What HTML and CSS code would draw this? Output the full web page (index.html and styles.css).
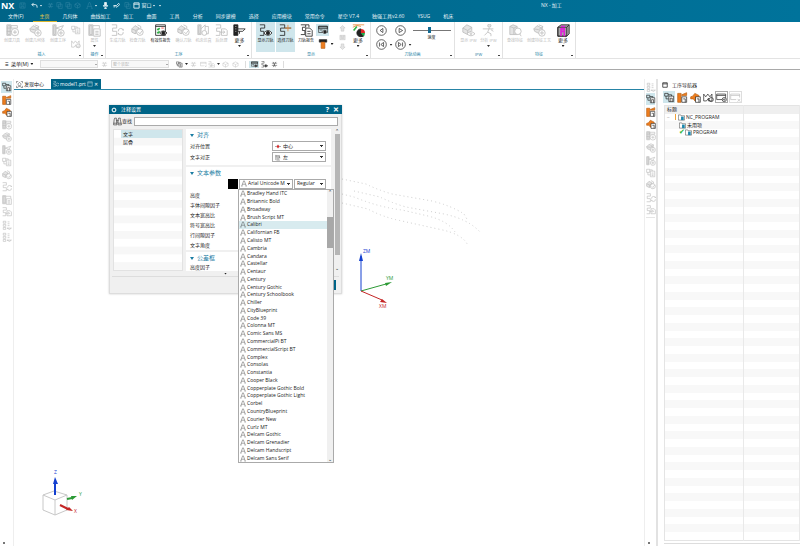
FILE: index.html
```
<!DOCTYPE html>
<html lang="zh-CN">
<head>
  <meta charset="UTF-8">
  <meta name="viewport" content="width=device-width, initial-scale=1.0">
  <title>NX - 加工</title>
  <link rel="stylesheet" href="styles.css">
</head>
<body>
  <svg class="sprite" aria-hidden="true">
    <symbol id="tool-add" viewBox="0 0 16 16"><path d="M1 1h5v13H1zM6 2h8v3H6zM1 5h5M1 9h5"/><path class="solid" d="M2 2h3v11H2z"/><circle class="paper" cx="11" cy="10" r="4.5"/><path d="M11 7.500v5M8.500 10h5"/></symbol>
    <symbol id="geom-add" viewBox="0 0 16 16"><path class="solid" d="M1 6l4-4 4 2 3 3-4 5-6-3z"/><path d="M7 1l5 2-1 5M1 6l6 1 5-4"/><circle class="paper" cx="11" cy="11" r="4"/><path d="M11 8.500v5M8.500 11h5"/></symbol>
    <symbol id="op-add" viewBox="0 0 16 16"><path d="M1 1h4v13H1zM5 5l9-3-3 5z"/><path class="solid" d="M2 2h2v11H2z"/><circle class="paper" cx="11" cy="11" r="4"/><path d="M11 8.500v5M8.500 11h5"/></symbol>
    <symbol id="pages" viewBox="0 0 16 16"><path d="M1 2h5v5H1zM3 7v4h4"/><path class="paper" d="M7 5h7v9H7z"/><path d="M9 8h3M9 10h3M9 12h3M6 3h4v2"/></symbol>
    <symbol id="mill" viewBox="0 0 16 16"><path d="M1 3l3 4 3-4 3 4 3-4v10H8V9l-3 4H1z"/><circle cx="12" cy="11" r="3"/></symbol>
    <symbol id="props" viewBox="0 0 16 16"><path d="M1 1h5v13H1zM6 2h8v3"/><path class="solid" d="M2 2h3v11H2z"/><path class="paper" d="M7 6h8v9H7z"/><path d="M9 9h4M9 11h4M9 13h4"/></symbol>
    <symbol id="track" viewBox="0 0 16 16"><path d="M1 1h6v4H2v4h5v5H1"/><path d="M9 9a3 3 0 0 1 6-1v-2M15 10a3 3 0 0 1-6 1v2"/></symbol>
    <symbol id="track-out" viewBox="0 0 16 16"><path d="M1 1h6v4H2v4h4v5H1"/><path d="M8 6h5l2 2v6H8zM6 10h6M10 8l2 2-2 2"/></symbol>
    <symbol id="track-eye" viewBox="0 0 16 16"><path d="M1 1h6v4H2v4h4v5H1"/><path class="paper" d="M6 11q5-6 10 0q-5 6-10 0z"/><circle class="fill" cx="11" cy="11" r="2"/></symbol>
    <symbol id="track-pick" viewBox="0 0 16 16"><path d="M1 1h6v4H2v4h5v5H1M7 5h8"/><path class="orange" d="M11 1v8M7 5h8"/></symbol>
    <symbol id="track-doc" viewBox="0 0 16 16"><path d="M1 1h6v3H3v4h3v5H1M7 1h4v3"/><path class="paper" d="M7 5h5l3 3v7H7z"/><path d="M9 9h4M9 12h4"/></symbol>
    <symbol id="verify" viewBox="0 0 16 16"><path class="solid" d="M1 6l4-4 5 3v4l-5 3-4-2z"/><path d="M1 6l5 2 4-3M6 8v4M8 1l4 2v3"/><circle class="paper" cx="11" cy="10" r="4"/><path d="M9 10l2 2 3-4"/></symbol>
    <symbol id="report" viewBox="0 0 16 16"><path d="M2 1h12v13H2zM2 3h12"/><path class="green" d="M4 6l1 1 2-2M4 10l1 1 2-2"/><path class="red" d="M9 5h3"/><path class="paper" d="M7 11q4-5 9 0q-5 5-9 0z"/><circle class="fill" cx="11.500" cy="11" r="2"/></symbol>
    <symbol id="machine" viewBox="0 0 16 16"><path d="M1 1h4v12H1zM5 6l5-5v7M10 3h4v9H9"/><path class="solid" d="M2 2h2v10H2z"/><circle class="paper" cx="9" cy="11" r="3"/></symbol>
    <symbol id="machine-more" viewBox="0 0 16 16"><path class="fill" d="M1 1h5v13H1z"/><path class="lite" d="M3 3h1M3 6h1M3 9h1"/><path d="M6 6h9l-3 3H6M8 9v3"/></symbol>
    <symbol id="screen-eye" viewBox="0 0 16 16"><path class="solid" d="M1 2h14v4H1z"/><path d="M1 2h14v10H1zM3 8h4"/><path class="paper" d="M6 11q5-5 9 0q-4 5-9 0z"/><circle class="fill" cx="11" cy="11" r="2"/></symbol>
    <symbol id="bolt" viewBox="0 0 16 16"><path class="fill" d="M2 1h12v4H2z"/><path class="orange-fill" d="M5 5h6v10H5z"/></symbol>
    <symbol id="arrow-up" viewBox="0 0 16 16"><path class="solid" d="M8 1l6 6h-3v7H5V7H2z"/></symbol>
    <symbol id="arrow-down" viewBox="0 0 16 16"><path class="solid" d="M8 15l6-6h-3V2H5v7H2z"/></symbol>
    <symbol id="stack" viewBox="0 0 16 16"><path class="solid" d="M2 3h12v10H2z"/><path d="M5 3v4h6V3M5 10h6"/></symbol>
    <symbol id="palette" viewBox="0 0 16 16"><path class="orange" d="M1 4q5-4 10-1M1 1h14"/><path class="green" d="M2 8l4-5"/><path class="fill" d="M11 6v5l4 3a5 5 0 1 1-4-8z"/><path class="red-fill" d="M11 6a5 5 0 0 1 5 5h-5z"/><path class="green-fill" d="M11 11h5a5 5 0 0 1-2 4z"/></symbol>
    <symbol id="play-back" viewBox="0 0 16 16"><circle cx="8" cy="8" r="7"/><path d="M10 5L6 8l4 3z"/></symbol>
    <symbol id="play" viewBox="0 0 16 16"><circle cx="8" cy="8" r="7"/><path d="M6 5l5 3-5 3z"/></symbol>
    <symbol id="first" viewBox="0 0 16 16"><circle cx="8" cy="8" r="7"/><path d="M11 5L7 8l4 3zM5 5v6"/></symbol>
    <symbol id="last" viewBox="0 0 16 16"><circle cx="8" cy="8" r="7"/><path d="M5 5l4 3-4 3zM11 5v6"/></symbol>
    <symbol id="ipw" viewBox="0 0 16 16"><path class="solid" d="M1 5l5-4 6 3v4l-5 5-6-3z"/><path d="M1 5l6 3 5-4M7 8v5"/><path class="paper" d="M6 12q5-5 10 0q-5 5-10 0z"/><circle cx="11" cy="12" r="1"/></symbol>
    <symbol id="runner" viewBox="0 0 16 16"><circle class="solid" cx="9" cy="2" r="2"/><path d="M1 6h13M9 5l-2 5 4 2v3M7 10l-4 4M11 7l3 2"/></symbol>
    <symbol id="feature" viewBox="0 0 16 16"><path class="solid" d="M1 3l4-2 5 2v10H1z"/><path d="M1 3l5 2v8M6 5l4-2"/><circle class="paper" cx="11" cy="9" r="4"/><path d="M13 12l2 3"/></symbol>
    <symbol id="magenta" viewBox="0 0 16 16"><path class="solid" d="M1 4l4-3h10v11l-3 3H1z"/><path d="M1 4h11v11M12 4l3-3M1 4v11h11"/><path class="magenta" d="M5 15V6h4v9M5 9h4M5 3h5"/></symbol>
    <symbol id="op-tree" viewBox="0 0 16 16"><path d="M1 2h5v4H1zM3 6v4h4M6 4h5v3"/><path class="paper" d="M7 6h7v8H7z"/><path d="M9 9h3v5M9 9v5"/></symbol>
    <symbol id="tool-tree" viewBox="0 0 16 16"><path class="orange-fill" d="M1 2h5v13H1zM7 4l7-3v4H7z"/><path class="paper" d="M7 7h7v8H7z"/><path d="M9 10h3v5"/></symbol>
    <symbol id="geom-tree" viewBox="0 0 16 16"><path class="orange-fill" d="M1 7l3-1 3-4 6 3v6l-6 2-2-3H1z"/><path class="paper" d="M8 7h7v8H8z"/><path d="M10 10h3v5"/></symbol>
    <symbol id="rows" viewBox="0 0 16 16"><path d="M2 2h4v3H2zM2 7h4v3H2zM2 12h4v3H2zM9 3h3M9 6h3M9 9h3M8 13h7l-3 2z"/></symbol>
    <symbol id="window-gear" viewBox="0 0 16 16"><path d="M1 3h13v8H1zM1 5h13"/><circle class="paper" cx="12" cy="11" r="3"/><circle cx="12" cy="11" r="1"/></symbol>
    <symbol id="window-x" viewBox="0 0 16 16"><path d="M9 11H1V3h13v5M1 5h13M11 10l4 4M15 10l-4 4"/></symbol>
    <symbol id="cube" viewBox="0 0 16 16"><path d="M2 5l6-3 6 3v6l-6 3-6-3zM2 5l6 3 6-3M8 8v6"/></symbol>
    <symbol id="scan" viewBox="0 0 16 16"><path d="M1 5V1h4M11 1h4v4M15 11v4h-4M5 15H1v-4M8 3l4 4-4 5-4-5zM4 12h8"/></symbol>
    <symbol id="frame" viewBox="0 0 16 16"><path d="M2 2h12v12H2zM2 5h12"/></symbol>
    <symbol id="save" viewBox="0 0 16 16"><path d="M2 2h12v12H2zM5 2v5h6V2M5 14v-4h6v4"/></symbol>
    <symbol id="undo" viewBox="0 0 16 16"><path d="M6 2L2 6l4 4M2 6h8q5 0 4 7"/></symbol>
    <symbol id="cut" viewBox="0 0 16 16"><path d="M2 5h12M2 10h12M5 2l5 12M11 2L5 14"/></symbol>
    <symbol id="copy" viewBox="0 0 16 16"><path d="M2 1h8v10H2zM6 5h8v10H6z"/></symbol>
    <symbol id="mic" viewBox="0 0 16 16"><path class="fill" d="M6 1h4v8H6z"/><path d="M3 7q0 5 5 5t5-5M8 12v3M5 15h6"/></symbol>
    <symbol id="pen" viewBox="0 0 16 16"><path d="M1 8h7l5-5 2 3-6 6-3-2M1 11h4"/></symbol>
    <symbol id="gear" viewBox="0 0 16 16"><circle cx="8" cy="8" r="4.500"/><path d="M8 1v3M8 12v3M1 8h3M12 8h3M3 3l2 2M11 11l2 2M13 3l-2 2M5 11l-2 2"/></symbol>
    <symbol id="binoculars" viewBox="0 0 16 16"><path d="M3 2h3v3l1 9H1l1-9zM10 2h3v3l2 9H9V5zM6 6h4M7 9h2M1 11h6M9 11h6"/></symbol>
    <symbol id="letter-a" viewBox="0 0 16 16"><path d="M2 15L7 1h2l5 14M4 10h8M1 15h3M12 15h3"/></symbol>
    <symbol id="center-mark" viewBox="0 0 16 16"><path d="M0 8h16M8 3v10"/><path class="red-fill" d="M5 5h6v6H5z"/></symbol>
    <symbol id="left-mark" viewBox="0 0 16 16"><path d="M2 1v14M2 3h10v3H2M4 9h10M4 12h7M4 15h9M12 6v3"/></symbol>
    <symbol id="folder" viewBox="0 0 16 16"><path class="paper" d="M1 2h5l1 2h8v10H1z"/><path class="teal-fill" d="M7 6h6v8H7z"/></symbol>
  </svg>

  <header class="app-head">
    <div class="titlebar">
      <strong class="brand">NX</strong>
      <div class="quick">
        <button class="q dim" aria-label="保存"><svg><use href="#save"/></svg></button>
        <button class="q wide" aria-label="撤消"><svg><use href="#undo"/></svg><i class="caret"></i></button>
        <button class="q dim" aria-label="剪切"><svg><use href="#cut"/></svg></button>
        <button class="q dim" aria-label="复制"><svg><use href="#copy"/></svg></button>
        <button class="q dim" aria-label="粘贴"><svg><use href="#copy"/></svg></button>
        <button class="q dim" aria-label="重复"><svg><use href="#cube"/></svg></button>
        <button class="q wide dim" aria-label="文本"><svg><use href="#letter-a"/></svg><i class="caret"></i></button>
        <button class="q" aria-label="语音"><svg><use href="#mic"/></svg></button>
        <button class="q pen" aria-label="触控"><svg><use href="#pen"/></svg></button>
        <button class="q dim" aria-label="层叠"><svg><use href="#copy"/></svg></button>
        <button class="q text"><svg><use href="#frame"/></svg>窗口<i class="caret"></i></button>
        <button class="q tail" aria-label="更多"><i class="caret"></i></button>
      </div>
      <span class="app-title">NX - 加工</span>
    </div>
    <nav class="menu">
      <a href="#" class="m-file">文件(F)</a>
      <a href="#" class="active">主页</a>
      <a href="#">几何体</a>
      <a href="#">曲线加工</a>
      <a href="#">加工</a>
      <a href="#">曲面</a>
      <a href="#">工具</a>
      <a href="#">分析</a>
      <a href="#">同步建模</a>
      <a href="#">选择</a>
      <a href="#">应用模块</a>
      <a href="#">常用命令</a>
      <a href="#">星空 V7.4</a>
      <a href="#">独强工具v2.60</a>
      <a href="#">YSUG</a>
      <a href="#">机床</a>
    </nav>
  </header>

  <div class="ribbon">
    <section class="group g-insert">
      <div class="tools">
        <button disabled><svg><use href="#tool-add"/></svg>创建刀具</button>
        <button disabled><svg><use href="#geom-add"/></svg>创建几何体</button>
        <button disabled><svg><use href="#op-add"/></svg>创建工序</button>
        <div class="mini">
          <button disabled aria-label="创建程序"><svg><use href="#pages"/></svg></button>
          <button disabled aria-label="创建方法"><svg><use href="#mill"/></svg></button>
        </div>
      </div>
      <h2>插入</h2>
    </section>
    <section class="group g-action">
      <div class="tools">
        <button disabled><svg><use href="#props"/></svg>属性<i class="caret dark"></i></button>
      </div>
      <h2>操作</h2>
    </section>
    <section class="group g-process">
      <div class="tools">
        <button disabled><svg><use href="#track"/></svg>生成刀轨</button>
        <button disabled><svg><use href="#verify"/></svg>检查刀轨</button>
        <button class="wide"><svg><use href="#report"/></svg>有效性报告</button>
        <button disabled><svg><use href="#verify"/></svg>确认刀轨</button>
        <button disabled><svg><use href="#machine"/></svg>机床仿真</button>
        <button class="slim" disabled><svg><use href="#track-out"/></svg>后处理</button>
        <button class="more"><svg><use href="#machine-more"/></svg>更多<i class="caret"></i></button>
      </div>
      <h2>工序</h2>
    </section>
    <section class="group g-show">
      <div class="tools">
        <button class="on"><svg><use href="#track-eye"/></svg>显示刀轨</button>
        <button class="on"><svg><use href="#track-pick"/></svg>选择刀轨</button>
        <button><svg><use href="#track-doc"/></svg>刀轨报告</button>
        <div class="mini">
          <button class="on" aria-label="显示工件"><svg><use href="#screen-eye"/></svg></button>
          <button aria-label="显示刀具"><svg><use href="#bolt"/></svg><i class="caret"></i></button>
        </div>
        <div class="mini steps">
          <button disabled aria-label="上移"><svg><use href="#arrow-up"/></svg></button>
          <button disabled aria-label="当前层"><svg><use href="#stack"/></svg></button>
          <button disabled aria-label="下移"><svg><use href="#arrow-down"/></svg></button>
        </div>
        <button class="slim more"><svg><use href="#palette"/></svg>更多<i class="caret"></i></button>
      </div>
      <h2>显示</h2>
    </section>
    <section class="group g-anim">
      <div class="tools">
        <div class="player">
          <button aria-label="反向播放"><svg><use href="#play-back"/></svg></button>
          <button aria-label="播放"><svg><use href="#play"/></svg></button>
          <button aria-label="上一步"><svg><use href="#first"/></svg><i class="caret"></i></button>
          <button aria-label="下一步"><svg><use href="#last"/></svg><i class="caret"></i></button>
        </div>
        <div class="speed">
          <input type="range" id="speed" min="0" max="100" value="44">
          <label for="speed">速度</label>
        </div>
      </div>
      <h2>刀轨动画</h2>
    </section>
    <section class="group g-ipw">
      <div class="tools">
        <button disabled><svg><use href="#ipw"/></svg>显示 IPW</button>
        <button disabled><svg><use href="#runner"/></svg>分析 IPW<i class="caret dark"></i></button>
      </div>
      <h2>IPW</h2>
    </section>
    <section class="group g-feature">
      <div class="tools">
        <button disabled><svg><use href="#feature"/></svg>查找特征</button>
        <button disabled><svg><use href="#geom-add"/></svg>创建特征工艺</button>
        <button class="more"><svg><use href="#magenta"/></svg>更多<i class="caret"></i></button>
      </div>
      <h2>特征</h2>
    </section>
  </div>

  <div class="selectbar">
    <button class="menu-btn"><span class="burger">☰</span>菜单(M)<i class="caret"></i></button>
    <select class="filter" aria-label="类型过滤器" disabled><option></option></select>
    <button class="sb" disabled aria-label="重置过滤器"><svg><use href="#cut"/></svg></button>
    <select class="filter" aria-label="选择范围" disabled><option>整个装配</option></select>
    <div class="sb-icons">
      <button class="sb" aria-label="捕捉"><svg><use href="#pages"/></svg><i class="caret"></i></button>
      <button class="sb" disabled aria-label="选择"><svg><use href="#cut"/></svg></button>
      <button class="sb" disabled aria-label="视图"><svg><use href="#window-x"/></svg></button>
      <button class="sb" disabled aria-label="矩形"><svg><use href="#track-out"/></svg><i class="caret dark"></i></button>
      <button class="sb" disabled aria-label="体"><svg><use href="#cube"/></svg></button>
      <button class="sb" disabled aria-label="面"><svg><use href="#cube"/></svg></button>
    </div>
    <div class="sb-icons last">
      <button class="sb on" aria-label="显示"><svg><use href="#screen-eye"/></svg></button>
      <button class="sb" aria-label="坐标"><svg><use href="#track-eye"/></svg></button>
      <button class="sb" aria-label="比例"><svg><use href="#cut"/></svg></button>
    </div>
  </div>

  <div class="work">
    <aside class="rail rail-left">
      <div class="rail-icons" id="railLeft"></div>
      <span class="grip"></span>
    </aside>

    <main class="stage">
      <div class="doc-tabs">
        <button class="tab"><svg><use href="#scan"/></svg>发现中心</button>
        <button class="tab current"><svg><use href="#track"/></svg>model1.prt <svg><use href="#frame"/></svg><span>✕</span></button>
      </div>
      <div class="canvas">
        <svg class="curves" viewBox="0 0 150 75" aria-hidden="true">
          <path d="M0 7L24 12Q36 18 50 22L90 29Q110 34 122 42L126 49"/>
          <path d="M12 19L38 25Q50 31 64 35L102 42Q126 47 138 60"/>
          <path d="M0 22L12 25Q36 35 60 38L86 44Q106 49 113 60"/>
          <path d="M0 31L26 37Q40 45 60 49L96 57Q122 62 126 74"/>
        </svg>
        <svg class="wcs" viewBox="0 0 50 66" role="img" aria-label="加工坐标系">
          <path class="z" d="M9 43V8"/><path class="z-tip" d="M9 5l2 8H7z"/>
          <path class="y" d="M9 43l25-7"/><path class="y-tip" d="M40 34l-6 4-1-3z"/>
          <path class="x" d="M9 43l21 9"/><path class="x-tip" d="M35 55l-7-1 2-3z"/>
          <text class="z-tip" x="11" y="5">ZM</text>
          <text class="y-tip" x="34" y="32">YM</text>
          <text class="x-tip" x="27" y="60">XM</text>
        </svg>
        <svg class="view-cube" viewBox="0 0 46 50" role="img" aria-label="视图方向">
          <path class="box" d="M3 27l11-4 13 4v15l-12 5-12-5zM3 27l12 5 12-5M15 32v15"/>
          <path class="z thick" d="M15 27V14"/><path class="z-tip" d="M15 9l3 7h-5z"/>
          <path class="y thick" d="M27 31l5-1"/><path class="y-tip" d="M37 28l-5 4-1-4z"/>
          <path class="x thick" d="M20 37l8 4"/><path class="x-tip" d="M33 43l-7-1 3-3z"/>
          <text class="z-tip" x="14" y="6">Z</text>
          <text class="y-tip" x="39" y="28">Y</text>
          <text class="x-tip" x="34" y="45">X</text>
        </svg>
      </div>
    </main>

    <aside class="rail rail-right">
      <div class="rail-icons" id="railRight"></div>
      <span class="grip"></span>
    </aside>

    <section class="navigator">
      <h2><svg><use href="#frame"/></svg>工序导航器</h2>
      <div class="nav-tools">
        <button class="on" aria-label="程序顺序视图"><svg><use href="#op-tree"/></svg></button>
        <button aria-label="机床视图"><svg><use href="#tool-tree"/></svg></button>
        <button aria-label="几何视图"><svg><use href="#geom-tree"/></svg></button>
        <button aria-label="加工方法视图"><svg><use href="#mill"/></svg></button>
        <button class="boxed" aria-label="设置"><svg><use href="#window-gear"/></svg></button>
        <button class="boxed" disabled aria-label="关闭视图"><svg><use href="#window-x"/></svg></button>
      </div>
      <div class="tree-wrap">
        <table class="tree">
          <thead><tr><th scope="col">标题</th><th scope="col"></th></tr></thead>
          <tbody id="treeBody">
            <tr><td><span class="node"><i class="minus">−</i><i class="flag"></i><svg><use href="#folder"/></svg>NC_PROGRAM</span></td><td></td></tr>
            <tr><td><span class="node lv1"><svg><use href="#folder"/></svg>未用项</span></td><td></td></tr>
            <tr><td><span class="node lv1"><i class="tick">✔</i><svg><use href="#folder"/></svg>PROGRAM</span></td><td></td></tr>
          </tbody>
        </table>
      </div>
    </section>
  </div>

  <div class="dialog" role="dialog" aria-labelledby="dlgTitle">
    <div class="dlg-head">
      <svg><use href="#gear"/></svg>
      <span id="dlgTitle">注释设置</span>
      <button aria-label="帮助">?</button>
      <button aria-label="关闭">✕</button>
    </div>
    <div class="search">
      <svg><use href="#binoculars"/></svg>
      <label for="find">查找</label>
      <input type="text" id="find">
    </div>
    <div class="dlg-body">
      <ul class="cats">
        <li class="sel">文字</li>
        <li>层叠</li>
      </ul>
      <div class="panes">
        <section class="pane">
          <h3>对齐</h3>
          <div class="field">
            <label for="alignPos">对齐位置</label>
            <span class="combo"><svg><use href="#center-mark"/></svg><select id="alignPos"><option>中心</option></select></span>
          </div>
          <div class="field">
            <label for="justify">文字对正</label>
            <span class="combo"><svg><use href="#left-mark"/></svg><select id="justify"><option>左</option></select></span>
          </div>
        </section>
        <section class="pane text-pane">
          <h3>文本参数</h3>
          <div class="font-row">
            <button class="swatch" aria-label="颜色"></button>
            <span class="combo face"><svg><use href="#letter-a"/></svg><select aria-label="字体"><option>Arial Unicode M</option></select></span>
            <span class="combo style"><select aria-label="字形"><option>Regular</option></select></span>
          </div>
          <ul class="params">
            <li>高度</li>
            <li>字体间隙因子</li>
            <li>文本宽高比</li>
            <li>符号宽高比</li>
            <li>行间隙因子</li>
            <li>文字角度</li>
          </ul>
        </section>
        <section class="pane rest">
          <h3>公差框</h3>
          <div class="field">高度因子</div>
        </section>
      </div>
      <div class="scroll"><span>⌃</span><i></i><span>⌄</span></div>
    </div>
    <div class="dlg-more"><i class="caret"></i></div>
    <div class="dlg-foot"><button class="ok">确定</button></div>

    <div class="font-menu">
      <ul role="listbox" aria-label="字体" id="fontList"></ul>
      <div class="menu-scroll"><span>⌃</span><i></i><span>⌄</span></div>
    </div>
  </div>

  <script>
    const fonts = [
      'Bradley Hand ITC', 'Britannic Bold', 'Broadway', 'Brush Script MT', 'Calibri',
      'Californian FB', 'Calisto MT', 'Cambria', 'Candara', 'Castellar', 'Centaur',
      'Century', 'Century Gothic', 'Century Schoolbook', 'Chiller', 'CityBlueprint',
      'Code 39', 'Colonna MT', 'Comic Sans MS', 'CommercialPi BT', 'CommercialScript BT',
      'Complex', 'Consolas', 'Constantia', 'Cooper Black', 'Copperplate Gothic Bold',
      'Copperplate Gothic Light', 'Corbel', 'CountryBlueprint', 'Courier New', 'Curlz MT',
      'Delcam Gothic', 'Delcam Grenadier', 'Delcam Handscript', 'Delcam Sans Serif'
    ];
    document.getElementById('fontList').innerHTML = fonts.map(name =>
      `<li role="option" aria-selected="${name === 'Calibri'}"><svg><use href="#letter-a"/></svg>${name}</li>`
    ).join('');

    // [icon, state]
    const left = [
      ['op-tree', 'on'], ['tool-tree', ''], ['geom-tree', ''], ['tool-add', 'off'], ['geom-add', 'off'],
      ['op-add', 'off'], ['pages', 'off'], ['verify', 'off'], ['track', 'off'], ['props', 'off'],
      ['track-out', 'off'], ['rows', 'off'], ['rows', 'off']
    ];
    const right = [
      ['rows', 'off'], ['op-tree', 'on'], ['tool-tree', ''], ['geom-tree', ''], ['tool-add', 'off'],
      ['geom-add', 'off'], ['op-add', 'off'], ['pages', 'off'], ['verify', 'off'], ['track', 'off'],
      ['track-out', 'off']
    ];
    const railButton = ([icon, state]) =>
      `<button class="${state}" aria-label="${icon}"${state === 'off' ? ' disabled' : ''}><svg><use href="#${icon}"/></svg></button>`;
    document.getElementById('railLeft').innerHTML = left.map(railButton).join('');
    document.getElementById('railRight').innerHTML = right.map(railButton).join('');

    // empty rows under the program tree
    document.getElementById('treeBody').insertAdjacentHTML('beforeend', '<tr><td></td><td></td></tr>'.repeat(52));
  </script>
</body>
</html>
```
FILE: styles.css
```
* {
  box-sizing: border-box;
}
body {
  margin: 0;
  height: 100vh;
  display: flex;
  flex-direction: column;
  overflow: hidden;
  background: #fff;
  color: #222;
  font: 5px/7px "Open Sans", "Noto Sans CJK SC", sans-serif;
}
button, input, select {
  margin: 0;
  padding: 0;
  border: 0;
  border-radius: 0;
  background: none;
  color: inherit;
  font: inherit;
  appearance: none;
}
h2, h3, ul {
  margin: 0;
  padding: 0;
  font: inherit;
  list-style: none;
}
i {
  font-style: normal;
}
svg {
  flex: none;
  width: 8px;
  height: 8px;
  fill: none;
  stroke: currentColor;
  stroke-width: 1;
}
.sprite {
  display: none;
}
.solid { fill: currentColor; fill-opacity: 0.4; }
.fill { fill: currentColor; }
.paper { fill: #fff; }
.lite { stroke: #fff; }
.orange { stroke: #e58a3a; }
.red { stroke: #e33; }
.green { stroke: #2fb344; stroke-width: 2; }
.magenta { stroke: #e020d8; stroke-width: 2; }
.orange-fill { fill: #ee7d1e; stroke: #b85e12; }
.red-fill { fill: #e02828; stroke: none; }
.green-fill { fill: #1fae4b; stroke: none; }
.teal-fill { fill: #1b87ad; stroke: none; }
.caret {
  flex: none;
  width: 3px;
  height: 2px;
  background: currentColor;
  clip-path: polygon(0 0, 100% 0, 50% 100%);
}
.caret.dark {
  color: #333;
}
.on {
  background: #cfe6ec;
}

/* title and menu */
.app-head {
  flex: none;
  height: 22px;
  background: linear-gradient(90deg, #006487, #00739b);
  color: #e8f3f7;
}
.titlebar {
  display: grid;
  grid-template-columns: 18px 1fr 259px;
  align-items: center;
  height: 11px;
}
.brand {
  padding-left: 1px;
  color: #fff;
  font-family: "Noto Sans", sans-serif;
  font-size: 9px;
  line-height: 11px;
}
.quick {
  display: flex;
}
.q {
  display: flex;
  align-items: center;
  justify-content: center;
  width: 9px;
}
.q svg {
  width: 7px;
  height: 7px;
  stroke-width: 2;
}
.q.wide { width: 19px; gap: 2px; }
.q.pen { width: 13px; }
.q.text { width: 25px; gap: 1px; }
.q.tail { width: 6px; }
.q.dim svg { color: #3c8cab; stroke-width: 1; }
.menu {
  display: flex;
  gap: 13px;
  height: 11px;
  padding-left: 8px;
  line-height: 10px;
}
.menu a {
  color: inherit;
  text-decoration: none;
  white-space: nowrap;
}
.menu .m-file {
  margin-right: 3px;
}
.menu .active {
  margin: 0 -7px;
  padding: 0 7px;
  border-bottom: 1px solid #d9b52e;
  color: #f0cf4b;
}

/* ribbon */
.ribbon {
  flex: none;
  display: flex;
  height: 37px;
  border-bottom: 1px solid #e3e3e3;
}
.group {
  flex: none;
  display: flex;
  flex-direction: column;
  justify-content: space-between;
  border-right: 1px solid #e2e2e2;
}
.g-insert { width: 84px; }
.g-action { width: 22px; }
.g-process { width: 146px; }
.g-show { width: 119px; }
.g-anim { width: 84px; }
.g-ipw { width: 48px; }
.g-feature { width: 73px; }
.group h2 {
  position: relative;
  color: #1b7da3;
  font-size: 4px;
  line-height: 6px;
  text-align: center;
}
.group h2::after {
  content: "";
  position: absolute;
  right: 2px;
  bottom: 2px;
  width: 2px;
  height: 1px;
  background: #444;
}
.tools {
  display: flex;
  justify-content: center;
  height: 30px;
}
.tools > button {
  display: flex;
  flex-direction: column;
  align-items: center;
  width: 20px;
  padding-top: 2px;
  font-size: 4px;
  line-height: 7px;
  white-space: nowrap;
}
.tools > button svg {
  width: 13px;
  height: 13px;
}
.tools > .more {
  font-size: 5px;
}
.tools > .on {
  border-right: 1px solid #fff;
}
.tools > button .caret {
  margin-top: 1px;
}
.tools > .wide { width: 26px; }
.tools > .slim { width: 16px; }
.g-insert .tools > button { width: 23px; }
.g-feature .tools > button { width: 24px; }
button:disabled {
  color: #bcbcbc;
}
.mini {
  display: flex;
  flex-direction: column;
  justify-content: space-between;
  width: 13px;
  padding: 2px 0;
}
.mini button {
  display: flex;
  align-items: center;
  justify-content: center;
  height: 12px;
}
.mini svg {
  width: 10px;
  height: 10px;
}
.g-show .mini .caret {
  margin-right: -6px;
  margin-left: 3px;
}
.steps {
  width: 21px;
  padding-left: 6px;
}
.steps button { height: 8px; }
.steps svg { width: 7px; height: 7px; }
.player {
  display: grid;
  grid-template-columns: 19px 19px;
  padding-top: 1px;
}
.player button {
  display: flex;
  align-items: center;
  padding-left: 3px;
  gap: 3px;
}
.player svg {
  width: 11px;
  height: 11px;
}
.speed {
  display: flex;
  flex-direction: column;
  align-items: center;
  width: 42px;
  padding-top: 4px;
  font-size: 4px;
}
.speed input {
  width: 38px;
  height: 8px;
  background: linear-gradient(#777, #777) center / 100% 1px no-repeat;
}
.speed input::-webkit-slider-thumb {
  appearance: none;
  width: 3px;
  height: 6px;
  background: #146a91;
}

/* selection bar */
.selectbar {
  flex: none;
  display: flex;
  align-items: center;
  height: 11px;
  border-bottom: 1px solid #a9a9a9;
  font-size: 4px;
}
.menu-btn {
  display: flex;
  align-items: center;
  gap: 2px;
  width: 40px;
  padding-left: 5px;
  font-size: 5px;
  white-space: nowrap;
}
.burger {
  font-size: 4px;
}
.filter {
  width: 58px;
  height: 8px;
  padding-left: 1px;
  border: 1px solid #d2d2d2;
  background: linear-gradient(#888, #888) 54px 3px / 2px 1px no-repeat #f6f6f6;
  color: #999;
}
.sb {
  display: flex;
  align-items: center;
  justify-content: center;
  gap: 2px;
  min-width: 10px;
}
.filter + .sb { width: 13px; }
.sb svg {
  width: 7px;
  height: 7px;
}
.sb-icons {
  display: flex;
  padding: 0 5px 0 7px;
  border-right: 1px solid #ddd;
}
.sb-icons.last {
  padding: 0 4px 0 3px;
}

/* work area */
.work {
  flex: 1;
  display: flex;
  min-height: 0;
  padding-top: 9px;
}
.rail {
  flex: none;
  display: flex;
  flex-direction: column;
  justify-content: space-between;
  width: 14px;
  border-right: 1px solid #eee;
}
.rail-icons {
  display: flex;
  flex-direction: column;
  justify-content: space-between;
  height: 162px;
  margin: 2px 1px 0;
}
.rail-icons button {
  display: flex;
  align-items: center;
  justify-content: center;
  height: 12px;
}
.rail-icons svg {
  width: 10px;
  height: 10px;
}
.rail-right {
  border-right: 2px solid #e2e2e2;
  border-left: 1px solid #eee;
}
.rail-right .rail-icons {
  height: 137px;
  padding-bottom: 1px;
  border-bottom: 1px solid #e5e5e5;
}
.grip {
  width: 2px;
  height: 2px;
  margin: 0 0 2px 3px;
  background: #777;
}
.stage {
  flex: 1;
  display: flex;
  flex-direction: column;
  min-width: 0;
}
.doc-tabs {
  display: flex;
  height: 11px;
  border-bottom: 1px solid #2684a6;
}
.tab {
  display: flex;
  align-items: center;
  gap: 1px;
  width: 37px;
  padding-left: 2px;
  white-space: nowrap;
}
.tab svg { width: 7px; height: 7px; }
.tab.current {
  width: 50px;
  background: #006487;
  color: #fff;
}
.tab.current svg { width: 6px; height: 6px; }
.canvas {
  position: relative;
  flex: 1;
}
.curves, .wcs, .view-cube {
  position: absolute;
}
.curves {
  left: 328px;
  top: 82px;
  width: 150px;
  height: 75px;
  stroke: #cfcfcf;
  stroke-dasharray: 1 3;
}
.wcs {
  left: 338px;
  top: 158px;
  width: 50px;
  height: 66px;
}
.view-cube {
  left: 26px;
  bottom: 28px;
  width: 46px;
  height: 50px;
}
.box { stroke: #c8c8c8; }
.z { stroke: #1440d0; }
.y { stroke: #2c9a35; }
.x { stroke: #c42525; }
.thick { stroke-width: 2; }
.z-tip { fill: #1440d0; stroke: none; }
.y-tip { fill: #2c9a35; stroke: none; }
.x-tip { fill: #c42525; stroke: none; }

/* navigator */
.navigator {
  flex: none;
  display: flex;
  flex-direction: column;
  width: 142px;
  padding: 1px 0 2px 3px;
}
.navigator h2 {
  display: flex;
  align-items: center;
  gap: 4px;
  height: 10px;
  padding-left: 1px;
}
.navigator h2 svg { width: 6px; height: 6px; stroke-width: 2; }
.nav-tools {
  display: flex;
  gap: 1px;
  height: 15px;
  padding: 1px 2px;
}
.nav-tools button {
  display: flex;
  align-items: center;
  justify-content: center;
  width: 12px;
  height: 12px;
}
.nav-tools svg { width: 11px; height: 11px; }
.nav-tools .boxed { width: 13px; border: 1px solid #aaa; }
.nav-tools .boxed:disabled { border-color: #ddd; }
.tree-wrap {
  flex: 1;
  min-height: 0;
  padding-bottom: 2px;
  border-bottom: 1px solid #ddd;
  margin-left: 3px;
}
.tree {
  width: 100%;
  height: 100%;
  border-collapse: collapse;
  border: 1px solid #e4e4e4;
  table-layout: fixed;
  line-height: 7px;
}
.tree th, .tree td {
  height: 7px;
  padding: 0;
  border-right: 1px solid #e9e9e9;
}
.tree th {
  height: 8px;
  padding-left: 2px;
  background: #efefef;
  font-weight: normal;
  text-align: left;
}
.tree th:first-child { width: 79px; }
.tree tbody tr:nth-child(even) { background: #f8f8f8; }
.node {
  display: flex;
  align-items: center;
  gap: 1px;
  height: 7px;
  padding-left: 2px;
}
.node svg { width: 7px; height: 7px; }
.lv1 { padding-left: 14px; }
.flag { width: 1px; height: 6px; margin: 0 1px 0 4px; background: #f0a33c; }
.tick { width: 5px; color: #2bb534; font-family: "DejaVu Sans", sans-serif; font-size: 7px; }
.minus { width: 3px; color: #888; }

/* dialog window */
.dialog {
  position: absolute;
  left: 109px;
  top: 105px;
  display: flex;
  flex-direction: column;
  width: 233px;
  height: 189px;
  border: 1px solid #ddd;
  border-top: 0;
  background: #f0f0f0;
  box-shadow: 0 0 2px rgba(0, 0, 0, 0.2);
}
.dlg-head {
  display: flex;
  align-items: center;
  gap: 4px;
  height: 9px;
  padding: 0 3px 0 2px;
  margin: 0 -1px;
  background: #006487;
  color: #fff;
}
.dlg-head svg { width: 6px; height: 6px; stroke-width: 2; }
.dlg-head span { flex: 1; }
.dlg-head button { font-size: 7px; font-weight: bold; line-height: 9px; }
.search {
  display: flex;
  align-items: center;
  height: 15px;
  padding: 0 3px;
}
.search svg { width: 9px; height: 11px; }
.search input {
  flex: 1;
  height: 9px;
  margin-left: 2px;
  border: 1px solid #aaa;
  background: #fff;
}
.dlg-body {
  display: grid;
  grid-template-columns: 70px 145px 6px;
  column-gap: 3px;
  height: 143px;
  padding-left: 3px;
}
.cats {
  border: 1px solid #e2e2e2;
  background: linear-gradient(#fff 50%, #f7f7f7 50%) 0 0 / 100% 16px round;
}
.cats li {
  height: 8px;
  margin-left: 7px;
  padding-left: 2px;
  line-height: 8px;
}
.cats .sel { background: #cfe6ec; }
.panes {
  display: flex;
  flex-direction: column;
  gap: 2px;
}
.pane {
  flex: none;
  padding: 1px 5px 2px 4px;
  background: #fff;
}
.pane.text-pane,
.pane.rest { padding-bottom: 0; }
.pane.rest { flex: 1; }
.pane h3 {
  display: flex;
  align-items: center;
  gap: 3px;
  height: 11px;
  color: #1b7da3;
  font-size: 6px;
}
.pane h3::before {
  content: "";
  width: 4px;
  height: 3px;
  background: currentColor;
  clip-path: polygon(0 0, 100% 0, 50% 100%);
}
.field {
  display: flex;
  align-items: center;
  justify-content: space-between;
  height: 11px;
}
.rest .field { height: 7px; }
.combo {
  display: flex;
  align-items: center;
  width: 54px;
  height: 10px;
  padding-left: 2px;
  border: 1px solid #aaa;
  background: #fff;
}
.combo svg { width: 6px; height: 7px; }
.combo select {
  flex: 1;
  min-width: 0;
  height: 8px;
  padding-left: 2px;
  background: conic-gradient(from 315deg at 50% 100%, #333 90deg, transparent 0) right 2px center / 3px 2px no-repeat;
}
.font-row {
  display: flex;
  justify-content: flex-end;
  gap: 1px;
  height: 11px;
}
.swatch {
  width: 10px;
  height: 10px;
  background: #000;
}
.combo.face { width: 54px; padding-left: 1px; }
.combo.face select { padding-left: 1px; }
.combo.style { width: 32px; padding-left: 0; }
.params li {
  height: 10px;
  line-height: 10px;
}
.scroll, .menu-scroll {
  display: flex;
  flex-direction: column;
  align-items: center;
  background: #f0f0f0;
  line-height: 5px;
}
.scroll i {
  flex: 1;
  width: 5px;
  margin-bottom: 11px;
  background: #b5b5b5;
}
.dlg-more {
  display: flex;
  align-items: center;
  justify-content: center;
  height: 6px;
  margin: 0 2px;
  border-bottom: 1px solid #ddd;
  color: #222;
}
.dlg-foot {
  padding: 3px 5px;
  text-align: right;
}
.ok {
  width: 26px;
  height: 10px;
  background: #006487;
  color: #fff;
}
.font-menu {
  position: absolute;
  left: 128px;
  top: 84px;
  display: grid;
  grid-template-columns: 1fr 6px;
  width: 96px;
  height: 274px;
  border: 1px solid #aaa;
  background: #fff;
}
.font-menu ul {
  display: grid;
  grid-auto-rows: 1fr;
}
.font-menu li {
  display: flex;
  align-items: center;
  gap: 1px;
  padding-left: 1px;
  white-space: nowrap;
}
.font-menu li svg { width: 6px; height: 7px; }
.font-menu [aria-selected="true"] { background: #d8ebef; }
.menu-scroll i {
  width: 6px;
  height: 31px;
  margin: 22px 0 auto;
  background: #a8a8a8;
}
```
